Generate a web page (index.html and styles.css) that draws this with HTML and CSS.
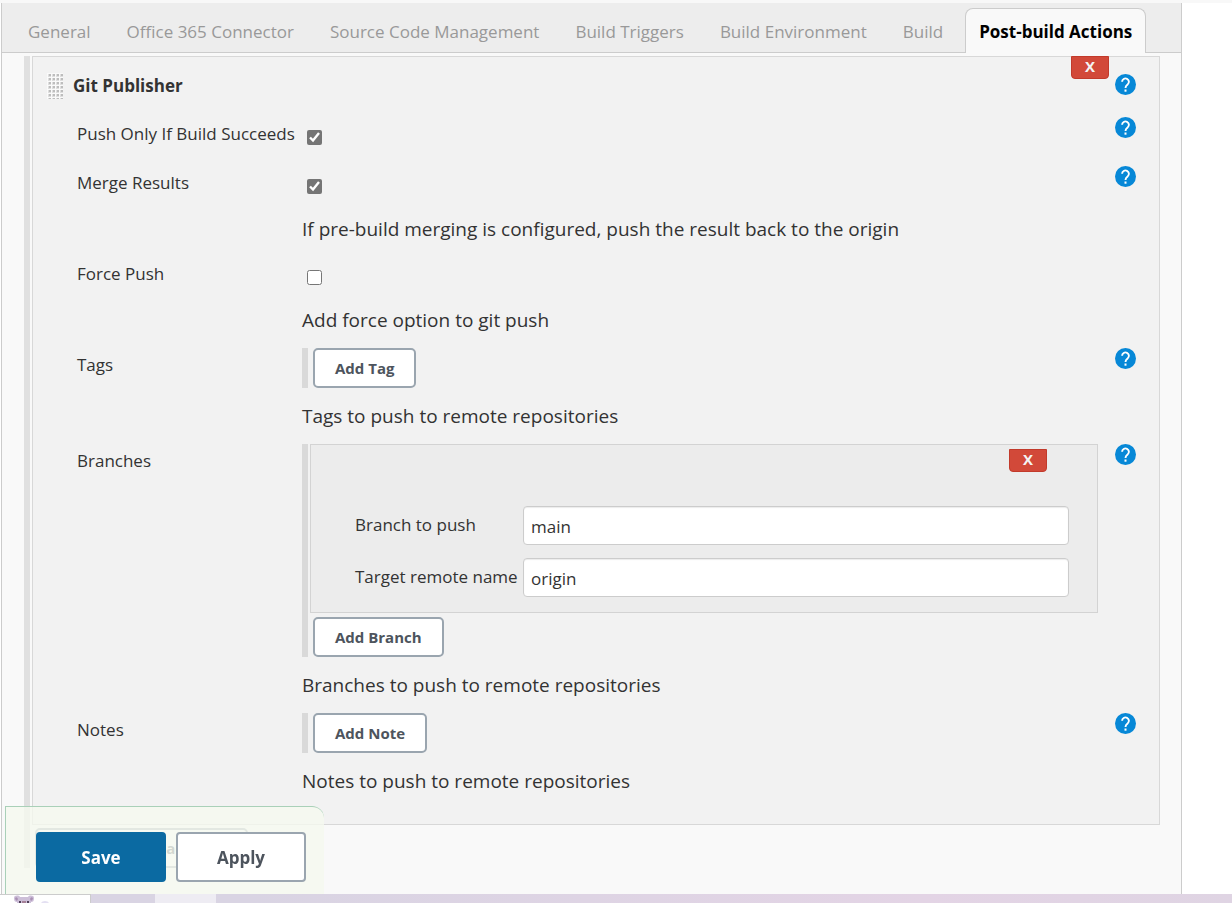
FILE: index.html
```html
<!DOCTYPE html>
<html lang="en">
<head>
<meta charset="utf-8">
<title>Post-build Actions</title>
<link rel="stylesheet" href="styles.css">
</head>
<body>
<svg class="defs" aria-hidden="true">
  <symbol id="help" viewBox="0 0 21 21">
    <circle cx="10.500" cy="10.500" r="10.500" fill="#0788d7"/>
    <path d="M7.100 7.800a3.400 3.400 0 1 1 5.500 2.700c-1.300 1-2.100 1.700-2.100 3.400" fill="none" stroke="#fff" stroke-width="1.900"/>
    <rect x="9.500" y="15.500" width="2" height="2.200" fill="#fff"/>
  </symbol>
</svg>
<div class="config">
  <nav class="tabs">
    <a class="tab" href="#general">General</a>
    <a class="tab" href="#office">Office 365 Connector</a>
    <a class="tab" href="#scm">Source Code Management</a>
    <a class="tab" href="#triggers">Build Triggers</a>
    <a class="tab" href="#environment">Build Environment</a>
    <a class="tab" href="#build">Build</a>
    <a class="tab tab-active" href="#post">Post-build Actions</a>
  </nav>
  <main class="content">
    <div class="sections">
      <section class="chunk">
        <header class="chunk-head">
          <svg class="grip" viewBox="0 0 16 26" aria-hidden="true">
            <defs>
              <pattern id="dots" width="4" height="4" patternUnits="userSpaceOnUse">
                <rect width="4" height="4" fill="#fafafa"/>
                <rect x="1" y="1" width="3" height="3" fill="#dedede"/>
                <rect x="2" y="1" width="2" height="2" fill="#bdbdbd"/>
              </pattern>
            </defs>
            <rect width="16" height="26" fill="url(#dots)"/>
          </svg>
          <h2 class="chunk-title">Git Publisher</h2>
          <button class="remove" aria-label="Remove Git Publisher">X</button>
          <button class="help" aria-label="Help for Git Publisher"><svg class="help-icon"><use href="#help"/></svg></button>
        </header>

        <div class="row">
          <label class="label" for="push">Push Only If Build Succeeds</label>
          <div class="check"><input class="box" type="checkbox" id="push" checked></div>
          <button class="help" aria-label="Help for Push Only If Build Succeeds"><svg class="help-icon"><use href="#help"/></svg></button>
        </div>
        <div class="row">
          <label class="label" for="merge">Merge Results</label>
          <div class="check"><input class="box" type="checkbox" id="merge" checked></div>
          <button class="help" aria-label="Help for Merge Results"><svg class="help-icon"><use href="#help"/></svg></button>
          <p class="desc">If pre-build merging is configured, push the result back to the origin</p>
        </div>
        <div class="row">
          <label class="label" for="force">Force Push</label>
          <div class="check"><input class="box" type="checkbox" id="force"></div>
          <p class="desc">Add force option to git push</p>
        </div>
        <div class="row">
          <span class="label">Tags</span>
          <div class="list"><button class="add">Add Tag</button></div>
          <button class="help" aria-label="Help for Tags"><svg class="help-icon"><use href="#help"/></svg></button>
          <p class="desc">Tags to push to remote repositories</p>
        </div>
        <div class="row">
          <span class="label">Branches</span>
          <div class="list">
            <div class="branch">
              <button class="remove" aria-label="Remove branch">X</button>
              <label class="field-label" for="branch">Branch to push</label>
              <input class="field" type="text" id="branch" value="main">
              <label class="field-label" for="remote">Target remote name</label>
              <input class="field" type="text" id="remote" value="origin">
            </div>
            <button class="add">Add Branch</button>
          </div>
          <button class="help" aria-label="Help for Branches"><svg class="help-icon"><use href="#help"/></svg></button>
          <p class="desc">Branches to push to remote repositories</p>
        </div>
        <div class="row">
          <span class="label">Notes</span>
          <div class="list"><button class="add">Add Note</button></div>
          <button class="help" aria-label="Help for Notes"><svg class="help-icon"><use href="#help"/></svg></button>
          <p class="desc">Notes to push to remote repositories</p>
        </div>
      </section>
      <button class="add add-step">Add post-build action</button>
    </div>
  </main>
</div>
<div class="actions">
  <button class="action save">Save</button>
  <button class="action apply">Apply</button>
</div>
<footer class="strip">
  <div class="strip-tab">
    <svg class="koala" viewBox="0 0 48 8" aria-hidden="true">
      <path d="M0 3C0 0 5 0 6 2h8c1-2 6-2 6 1 0 3-1 4-3 4v1H3V7C1 7 0 6 0 3z" fill="#cdbfd8"/>
      <path d="M1 3q2-2 3 1l-1 2q-2-1-2-3zM19 3q-2-2-3 1l1 2q2-1 2-3z" fill="#a98fb4"/>
      <path d="M5 6h2v2H5zM13 6h2v2h-2z" fill="#51415a"/>
      <path d="M8 6h4v2H8z" fill="#a58198"/>
      <path d="M27 8q1-2 4-2t4 2z" fill="#e4e0f2"/>
    </svg>
  </div>
  <div class="strip-light"></div>
</footer>
</body>
</html>
```
FILE: styles.css
```css
* { box-sizing: border-box; }

body {
  margin: 0;
  min-height: 100vh;
  display: flex;
  flex-direction: column;
  background: #fff;
  border-top: 3px solid #f8f8f8;
  color: #333;
  font-family: "Segoe UI", "Open Sans", "Noto Sans", sans-serif;
  font-size: 17px;
  line-height: 24px;
}

button, input { font: inherit; }
button { cursor: pointer; }
.defs { position: absolute; width: 0; height: 0; }

.config {
  flex: 1;
  margin: 0 50px 0 1px;
  border: 1px solid #ccc;
  border-width: 0 1px;
  background: #f9f9f9;
}

.tabs {
  display: flex;
  padding: 5px 0 0 12px;
  background: #ededed;
  border-bottom: 1px solid #ccc;
}

.tab {
  padding: 11px 13px 8px;
  margin-right: 8px;
  border: 1px solid transparent;
  border-bottom: 0;
  color: #999;
  text-decoration: none;
  white-space: nowrap;
}

.tab-active {
  margin: 0 0 -1px;
  border-color: #ccc;
  border-radius: 8px 8px 0 0;
  background: #f9f9f9;
  color: #000;
  font-weight: 700;
}

.content { padding: 3px 21px 0 22px; }

.sections {
  border-left: 6px solid #e0e0e0;
  padding-left: 2px;
}

.chunk {
  display: grid;
  gap: 13px;
  padding: 0 23px 28px 44px;
  border: 1px solid #d8d8d8;
  background: #f2f2f2;
}

.chunk-head {
  display: flex;
  align-items: flex-start;
  height: 47px;
  margin-left: -30px;
}

.grip { width: 16px; height: 26px; margin-top: 16px; }
.chunk-title { flex: 1; margin: 17px 0 0 10px; font-size: 17px; line-height: 24px; }
.chunk-head .help { margin: 17px 0 0 6px; }
.chunk-head .remove { margin-top: -1px; }

.remove {
  width: 38px;
  height: 23px;
  padding: 0 0 2px;
  border: 1px solid #c23a2b;
  border-radius: 0 0 4px 4px;
  background: #d24939;
  color: #f4f4f4;
  font-size: 15px;
  font-weight: 700;
  line-height: 19px;
}

.row {
  display: grid;
  grid-template-columns: 225px 1fr 38px;
  align-items: start;
}

.label { padding-top: 5px; }

.help {
  width: 21px;
  height: 21px;
  padding: 0;
  border: 0;
  background: none;
  justify-self: end;
}

.help-icon { display: block; width: 21px; height: 21px; }

.check { height: 36px; padding: 13px 0 0 5px; }

.box {
  display: block;
  width: 15px;
  height: 15px;
  margin: 0;
  accent-color: #757575;
}

.desc {
  grid-column: 2 / -1;
  margin: 13px 0 0;
  font-size: 19px;
  line-height: 30px;
}

.check ~ .desc { margin-top: 12px; }

.list {
  border-left: 6px solid #d9d9d9;
  padding-left: 2px;
}

.add {
  display: block;
  height: 40px;
  margin-left: 3px;
  padding: 0 20px;
  border: 2px solid #9aa5af;
  border-radius: 5px;
  background: #fff;
  color: #4d545d;
  font-size: 15px;
  font-weight: 700;
}

.add-step { width: 213px; margin: 3px 0 0 3px; padding: 0 32px 0 16px; white-space: nowrap; }

.branch {
  display: grid;
  grid-template-columns: 156px 1fr;
  gap: 13px 12px;
  padding: 4px 28px 15px 44px;
  margin-bottom: 4px;
  border: 1px solid #d3d3d3;
  background: #ececec;
}

.branch .remove {
  grid-column: 1 / -1;
  justify-self: end;
  margin: 0 22px 21px 0;
}

.field-label { padding-top: 7px; white-space: nowrap; }

.field {
  width: 100%;
  height: 39px;
  padding: 2px 7px 0;
  border: 1px solid #ccc;
  border-radius: 4px;
  background: #fff;
  box-shadow: inset 0 1px 1px rgba(0, 0, 0, 0.08);
  color: #333;
}

.actions {
  position: fixed;
  left: 5px;
  bottom: 9px;
  display: flex;
  gap: 10px;
  padding: 25px 18px 12px 30px;
  border: 1px solid #a9d0b8;
  border-width: 1px 0 0 1px;
  border-top-right-radius: 12px;
  background: rgba(245, 249, 239, 0.8);
}

.action {
  width: 130px;
  height: 50px;
  padding: 2px 0 0;
  border: 2px solid #9aa5af;
  border-radius: 4px;
  background: #fff;
  color: #4d545d;
  font-weight: 700;
}

.save { border-color: #0b6aa2; background: #0b6aa2; color: #fff; }

.strip {
  display: flex;
  height: 9px;
  background: linear-gradient(90deg, #d9d4e3 20%, #e3d4e5 75%, #dfd4e3);
}

.strip-tab {
  width: 91px;
  padding-left: 14px;
  border: 1px solid #ccc;
  border-width: 1px 1px 0 0;
  background: #fff;
}

.koala { display: block; width: 48px; height: 8px; }
.strip-light { width: 61px; margin-left: 64px; background: #eeecf3; }
```
